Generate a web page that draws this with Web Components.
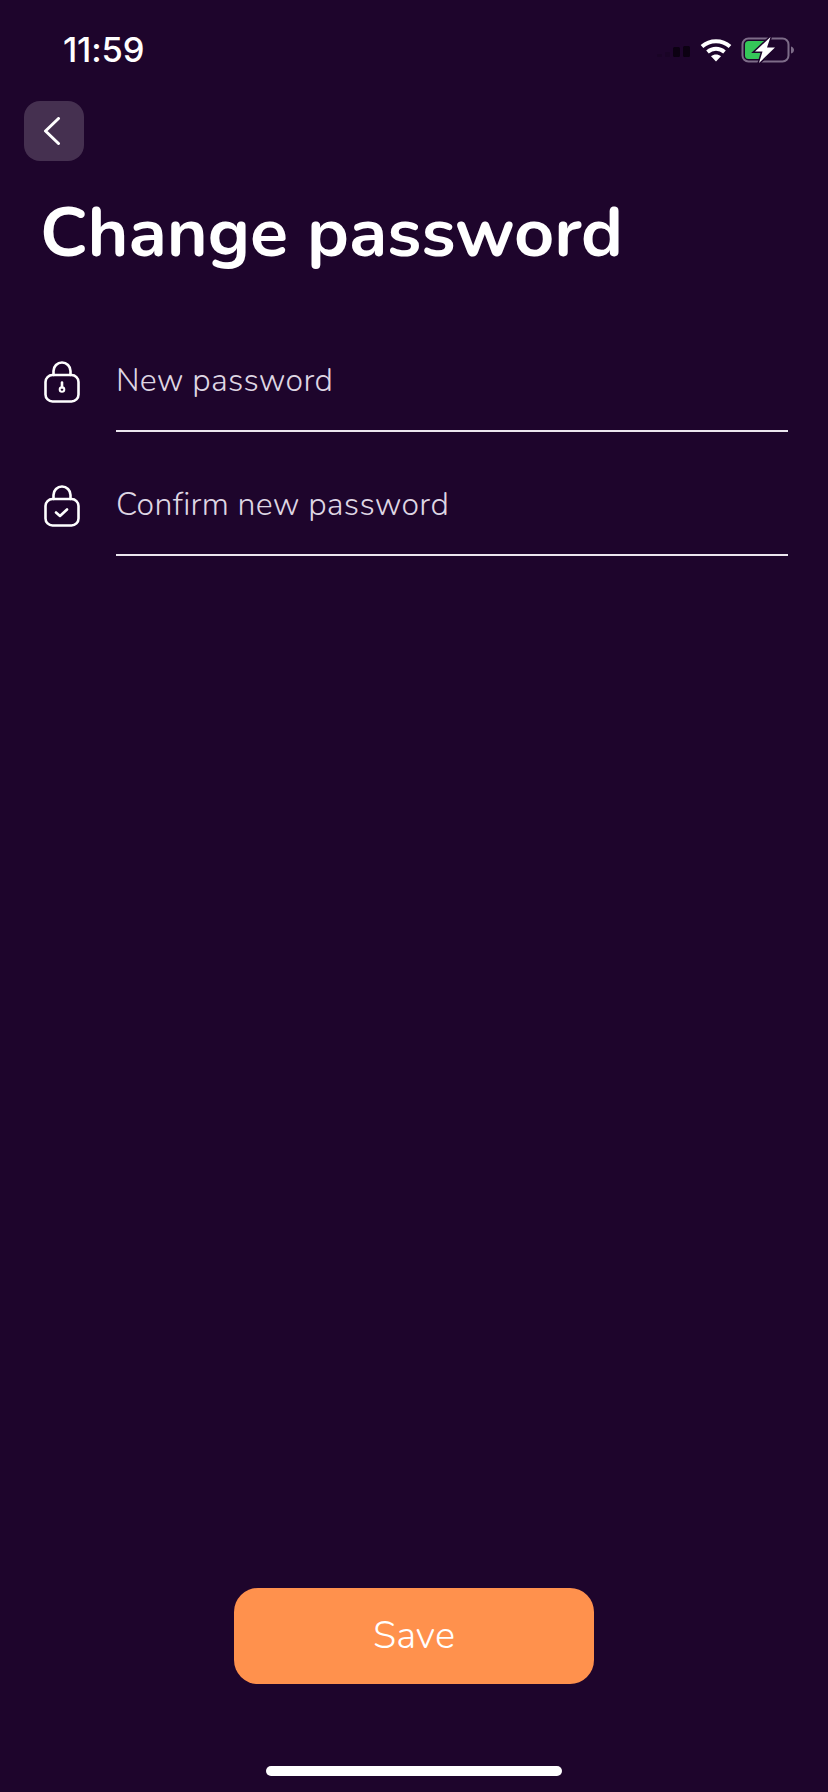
<!DOCTYPE html>
<html>
<head>
<meta charset="utf-8">
<title>Change password</title>
<style>
html, body { margin: 0; background: #1e052c; }
</style>
</head>
<body>
<change-password-screen>
  <status-bar slot="status" time="11:59"></status-bar>
  <back-button slot="back"></back-button>
  <span slot="title">Change password</span>
  <password-field icon="key" placeholder="New password"></password-field>
  <password-field icon="check" placeholder="Confirm new password"></password-field>
  <save-button slot="action">Save</save-button>
</change-password-screen>

<script>
class StatusBar extends HTMLElement {
    constructor(){
        super();
        this.attachShadow({mode: 'open'})
        this.shadowRoot.innerHTML = `
            <style>
                :host {
                    display: flex;
                    align-items: center;
                    justify-content: space-between;
                    height: 50px;
                    padding: 25px 33px 0 63px;
                }
                .time {
                    font: 500 34.5px/50px Inter, Roboto, sans-serif;
                    color: #fff;
                    letter-spacing: -0.2px;
                }
                .icons { display: flex; align-items: center; gap: 9px; }
                svg { display: block; }
            </style>
            <span class="time"></span>
            <div class="icons">
                <svg width="34" height="16" viewBox="0 0 34 16">
                    <rect x="0" y="12" width="5" height="3" rx="1" fill="#1a0426"/>
                    <rect x="8" y="10" width="5" height="5" rx="1" fill="#1a0426"/>
                    <rect x="16" y="5" width="7" height="10" rx="1.5" fill="#0c0112"/>
                    <rect x="26" y="4" width="7" height="11" rx="1.5" fill="#0c0112"/>
                </svg>
                <svg width="32" height="24" viewBox="0 0 32 24" fill="none" stroke="#fff" stroke-width="4">
                    <path d="M2 8.5C10 1.5 22 1.5 30 8.5"/>
                    <path d="M7.5 14C12.5 9.8 19.5 9.8 24.5 14"/>
                    <path d="M16 23.5l-5-5.2c3-2.3 7-2.3 10 0z" fill="#fff" stroke="none"/>
                </svg>
                <svg width="54" height="26" viewBox="0 0 54 26">
                    <rect x="1.500" y="1.500" width="46" height="23" rx="6" fill="none" stroke="#7d6c88" stroke-width="2"/>
                    <rect x="4" y="4" width="22" height="18" rx="3.5" fill="#35c759"/>
                    <path d="M50 9.5c2 .5 3 2 3 3.500s-1 3-3 3.500z" fill="#7d6c88"/>
                    <path d="M29.500 0L14 14.500h7.500L18 26l16-15.500h-8z" fill="#fff" stroke="#1e052c" stroke-width="3" paint-order="stroke"/>
                </svg>
            </div>
        `;
    }

    connectedCallback(){
        this.shadowRoot.querySelector('.time').textContent = this.getAttribute('time')
    }
}

class BackButton extends HTMLElement {
    constructor(){
        super();
        this.attachShadow({mode: 'open'})
        this.shadowRoot.innerHTML = `
            <style>
                :host {
                    display: flex;
                    align-items: center;
                    justify-content: center;
                    width: 60px;
                    height: 60px;
                    border-radius: 16px;
                    background: #453050;
                }
                svg { margin-right: 4px; }
            </style>
            <svg width="18" height="28" viewBox="0 0 18 28" fill="none" stroke="#fff" stroke-width="3" stroke-linecap="round" stroke-linejoin="round">
                <path d="M15.500 1.500L2.500 14l13 12.500"/>
            </svg>
        `;
    }
}

class PasswordField extends HTMLElement {
    constructor(){
        super();
        this.attachShadow({mode: 'open'})
        this.shadowRoot.innerHTML = `
            <style>
                :host {
                    display: flex;
                    gap: 36px;
                    align-items: flex-start;
                }
                svg { display: block; flex: none; margin-top: 11px; }
                .line {
                    flex: 1;
                    height: 80px;
                    border-bottom: 2px solid #ece6ef;
                    font: 300 32px/62px Nunito, "Nunito Sans", Lato, sans-serif;
                    color: #ded6e3;
                    letter-spacing: 0.3px;
                }
            </style>
            <svg width="36" height="42" viewBox="0 0 36 42" fill="none" stroke="#fff" stroke-width="2.600" stroke-linecap="round" stroke-linejoin="round">
                <rect x="1.500" y="14" width="33" height="26.500" rx="7"/>
                <path d="M9.500 14V10a8.500 8.500 0 0 1 17 0V14"/>
                <g class="mark"></g>
            </svg>
            <div class="line"></div>
        `;
    }

    connectedCallback(){
        this.shadowRoot.querySelector('.line').textContent = this.getAttribute('placeholder')
        const mark = this.shadowRoot.querySelector('.mark')
        if(this.getAttribute('icon') === 'check'){
            mark.innerHTML = '<path d="M12 27.500l4 3.500 7-6.500"/>'
        } else {
            mark.innerHTML = '<path d="M18 21.500v5"/><circle cx="18" cy="28.500" r="2.300" stroke-width="2"/>'
        }
    }
}

class SaveButton extends HTMLElement {
    constructor(){
        super();
        this.attachShadow({mode: 'open'})
        this.shadowRoot.innerHTML = `
            <style>
                :host {
                    display: flex;
                    align-items: center;
                    justify-content: center;
                    width: 360px;
                    height: 96px;
                    border-radius: 24px;
                    background: #ff914d;
                    color: #fff;
                    font: 300 38px/1 Nunito, "Nunito Sans", Lato, sans-serif;
                }
            </style>
            <slot></slot>
        `;
    }
}

class ChangePasswordScreen extends HTMLElement {
    constructor(){
        super();
        this.attachShadow({mode: 'open'})
        this.shadowRoot.innerHTML = `
            <style>
                :host {
                    display: flex;
                    flex-direction: column;
                    height: 1792px;
                    background: #1e052c;
                    overflow: hidden;
                }
                .top { padding: 26px 0 0 24px; }
                h1 {
                    margin: 27px 0 0 40px;
                    font: 700 70px/90px Nunito, "Nunito Sans", Lato, sans-serif;
                    color: #fff;
                }
                .form {
                    display: flex;
                    flex-direction: column;
                    gap: 42px;
                    padding: 0 40px 0 44px;
                    margin-top: 72px;
                }
                .spacer { flex: 1; }
                .action { display: flex; justify-content: center; }
                .home {
                    width: 296px;
                    height: 10px;
                    margin: 82px auto 16px;
                    border-radius: 5px;
                    background: #fff;
                }
            </style>
            <slot name="status"></slot>
            <div class="top"><slot name="back"></slot></div>
            <h1><slot name="title"></slot></h1>
            <div class="form"><slot></slot></div>
            <div class="spacer"></div>
            <div class="action"><slot name="action"></slot></div>
            <div class="home"></div>
        `;
    }
}

customElements.define('status-bar', StatusBar)
customElements.define('back-button', BackButton)
customElements.define('password-field', PasswordField)
customElements.define('save-button', SaveButton)
customElements.define('change-password-screen', ChangePasswordScreen)
</script>
</body>
</html>
